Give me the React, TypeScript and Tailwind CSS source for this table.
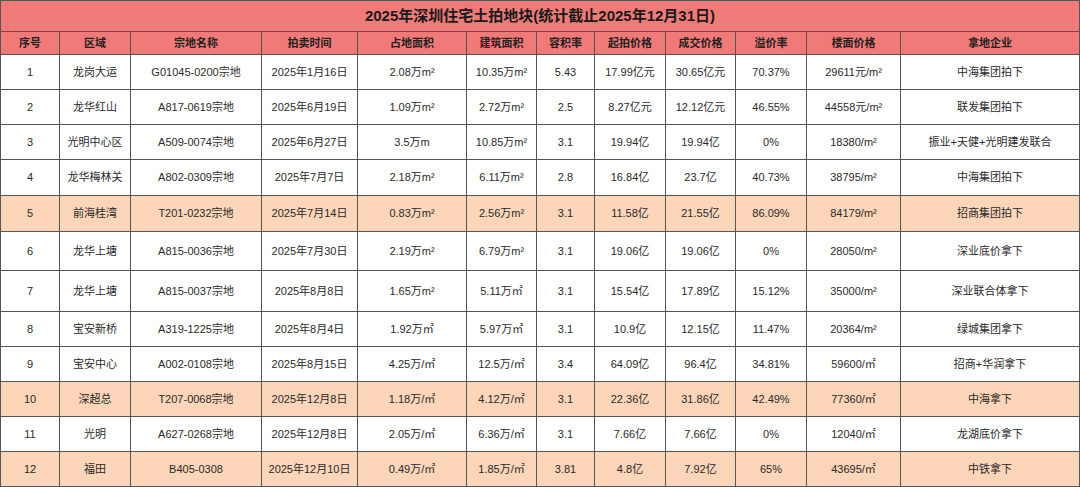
import React from 'react';

type Row = {
  cells: string[];
  h: string;
  hl?: boolean;
};

const widths = [
  'w-[60px]',
  'w-[71px]',
  'w-[131px]',
  'w-[96px]',
  'w-[109px]',
  'w-[70px]',
  'w-[58px]',
  'w-[71px]',
  'w-[70px]',
  'w-[71px]',
  'w-[94px]',
  'w-[179px]',
];

const headers = ['序号', '区域', '宗地名称', '拍卖时间', '占地面积', '建筑面积', '容积率', '起拍价格', '成交价格', '溢价率', '楼面价格', '拿地企业'];

const rows: Row[] = [
  { h: 'h-[35px]', cells: ['1', '龙岗大运', 'G01045-0200宗地', '2025年1月16日', '2.08万m²', '10.35万m²', '5.43', '17.99亿元', '30.65亿元', '70.37%', '29611元/m²', '中海集团拍下'] },
  { h: 'h-[35px]', cells: ['2', '龙华红山', 'A817-0619宗地', '2025年6月19日', '1.09万m²', '2.72万m²', '2.5', '8.27亿元', '12.12亿元', '46.55%', '44558元/m²', '联发集团拍下'] },
  { h: 'h-[35px]', cells: ['3', '光明中心区', 'A509-0074宗地', '2025年6月27日', '3.5万m', '10.85万m²', '3.1', '19.94亿', '19.94亿', '0%', '18380/m²', '振业+天健+光明建发联合'] },
  { h: 'h-[36px]', cells: ['4', '龙华梅林关', 'A802-0309宗地', '2025年7月7日', '2.18万m²', '6.11万m²', '2.8', '16.84亿', '23.7亿', '40.73%', '38795/m²', '中海集团拍下'] },
  { h: 'h-[36px]', hl: true, cells: ['5', '前海桂湾', 'T201-0232宗地', '2025年7月14日', '0.83万m²', '2.56万m²', '3.1', '11.58亿', '21.55亿', '86.09%', '84179/m²', '招商集团拍下'] },
  { h: 'h-[39px]', cells: ['6', '龙华上塘', 'A815-0036宗地', '2025年7月30日', '2.19万m²', '6.79万m²', '3.1', '19.06亿', '19.06亿', '0%', '28050/m²', '深业底价拿下'] },
  { h: 'h-[41px]', cells: ['7', '龙华上塘', 'A815-0037宗地', '2025年8月8日', '1.65万m²', '5.11万㎡', '3.1', '15.54亿', '17.89亿', '15.12%', '35000/m²', '深业联合体拿下'] },
  { h: 'h-[35px]', cells: ['8', '宝安新桥', 'A319-1225宗地', '2025年8月4日', '1.92万㎡', '5.97万㎡', '3.1', '10.9亿', '12.15亿', '11.47%', '20364/m²', '绿城集团拿下'] },
  { h: 'h-[35px]', cells: ['9', '宝安中心', 'A002-0108宗地', '2025年8月15日', '4.25万/㎡', '12.5万/㎡', '3.4', '64.09亿', '96.4亿', '34.81%', '59600/㎡', '招商+华润拿下'] },
  { h: 'h-[35px]', hl: true, cells: ['10', '深超总', 'T207-0068宗地', '2025年12月8日', '1.18万/㎡', '4.12万/㎡', '3.1', '22.36亿', '31.86亿', '42.49%', '77360/㎡', '中海拿下'] },
  { h: 'h-[35px]', cells: ['11', '光明', 'A627-0268宗地', '2025年12月8日', '2.05万/㎡', '6.36万/㎡', '3.1', '7.66亿', '7.66亿', '0%', '12040/㎡', '龙湖底价拿下'] },
  { h: 'h-[35px]', hl: true, cells: ['12', '福田', 'B405-0308', '2025年12月10日', '0.49万/㎡', '1.85万/㎡', '3.81', '4.8亿', '7.92亿', '65%', '43695/㎡', '中铁拿下'] },
];

function Cell({ i, children, className = '' }: { i: number; children: React.ReactNode; className?: string }) {
  return (
    <div
      className={`${widths[i]} ${i === 0 ? 'border-l' : ''} shrink-0 border-r border-b border-[#555] flex items-center justify-center whitespace-nowrap ${className}`}
    >
      {children}
    </div>
  );
}

export default function App() {
  return (
    <div className="w-[1080px] h-[487px] bg-white overflow-hidden font-['Liberation_Sans','Noto_Sans_CJK_SC',sans-serif] text-[11px] text-[#2a2a2a]">
      <div className="h-[32px] border border-[#555] bg-[#ef7a77] flex items-center justify-center text-[15px] font-bold text-[#1a1a1a]">
        2025年深圳住宅土拍地块(统计截止2025年12月31日)
      </div>
      <div className="flex h-[23px] bg-[#ef7a77] font-bold text-[#222]">
        {headers.map((t, i) => (
          <Cell key={t} i={i}>
            {t}
          </Cell>
        ))}
      </div>
      {rows.map((r) => (
        <div key={r.cells[0]} className={`flex ${r.h} ${r.hl ? 'bg-[#fdd5b8]' : 'bg-white'}`}>
          {r.cells.map((c, i) => (
            <Cell key={i} i={i}>
              {c}
            </Cell>
          ))}
        </div>
      ))}
    </div>
  );
}
